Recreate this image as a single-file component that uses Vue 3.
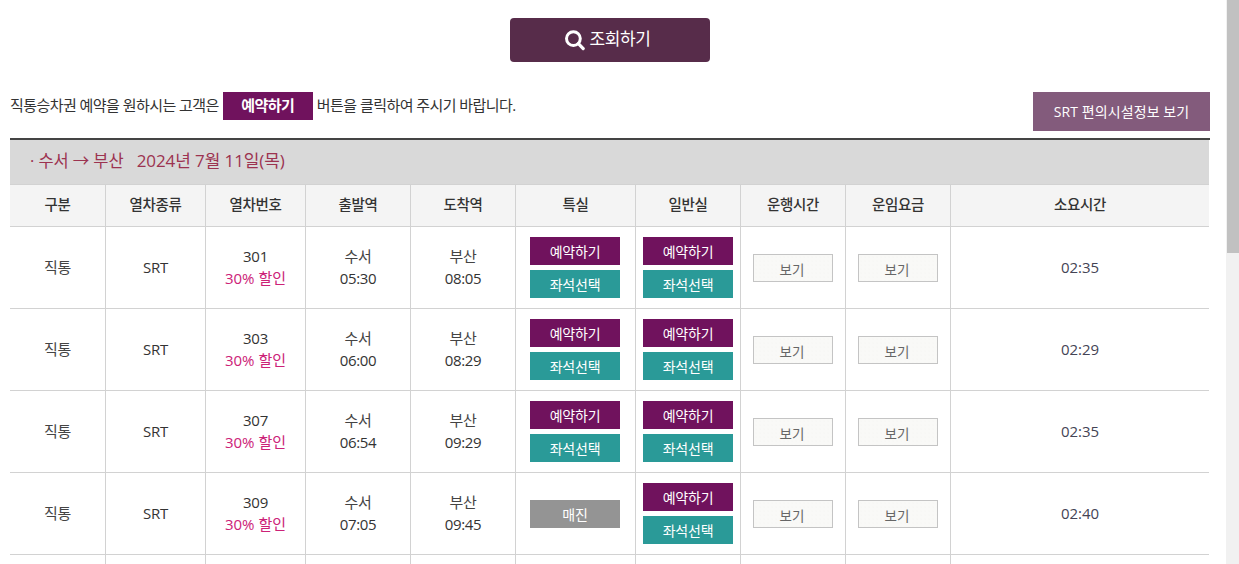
<script setup>
const rows = [
  { no: '301', dep: '05:30', arr: '08:05', dur: '02:35', special: true },
  { no: '303', dep: '06:00', arr: '08:29', dur: '02:29', special: true },
  { no: '307', dep: '06:54', arr: '09:29', dur: '02:35', special: true },
  { no: '309', dep: '07:05', arr: '09:45', dur: '02:40', special: false }
]
const heads = ['구분', '열차종류', '열차번호', '출발역', '도착역', '특실', '일반실', '운행시간', '운임요금', '소요시간']
const widths = [96, 100, 100, 105, 105, 120, 105, 105, 105, 258]
</script>

<template>
  <div class="page">
    <main class="main">
      <div class="search-wrap">
        <button class="search-btn">
          <svg class="search-icon" width="20" height="21" viewBox="0 0 20 21">
            <circle cx="8.4" cy="8.6" r="6.9" fill="none" stroke="#fff" stroke-width="3" />
            <path d="M13.4 13.6 L18.2 18.6" stroke="#fff" stroke-width="3.2" stroke-linecap="round" />
          </svg>
          <span class="search-label">조회하기</span>
        </button>
      </div>

      <div class="notice-row">
        <p class="notice">
          <span class="notice-text">직통승차권 예약을 원하시는 고객은</span>
          <span class="notice-badge">예약하기</span>
          <span class="notice-text">버튼을 클릭하여 주시기 바랍니다.</span>
        </p>
        <button class="facility-btn">SRT 편의시설정보 보기</button>
      </div>

      <div class="table-wrap">
        <div class="route">· 수서 → 부산 <span class="route-date">2024년 7월 11일(목)</span></div>
        <table class="trains">
          <colgroup>
            <col v-for="(w, i) in widths" :key="i" :style="{ width: w + 'px' }" />
          </colgroup>
          <thead>
            <tr>
              <th v-for="h in heads" :key="h">{{ h }}</th>
            </tr>
          </thead>
          <tbody>
            <tr v-for="r in rows" :key="r.no">
              <td><div class="cell-text">직통</div></td>
              <td class="dark"><div class="cell-text">SRT</div></td>
              <td class="dark">
                <div class="pair">
                  <div>{{ r.no }}</div>
                  <div class="discount">30% 할인</div>
                </div>
              </td>
              <td>
                <div class="pair">
                  <div>수서</div>
                  <div class="dark">{{ r.dep }}</div>
                </div>
              </td>
              <td>
                <div class="pair">
                  <div>부산</div>
                  <div class="dark">{{ r.arr }}</div>
                </div>
              </td>
              <td class="special">
                <div v-if="r.special" class="stack">
                  <button class="act reserve">예약하기</button>
                  <button class="act seat">좌석선택</button>
                </div>
                <button v-else class="act soldout">매진</button>
              </td>
              <td>
                <div class="stack">
                  <button class="act reserve">예약하기</button>
                  <button class="act seat">좌석선택</button>
                </div>
              </td>
              <td><button class="view">보기</button></td>
              <td><button class="view">보기</button></td>
              <td class="dur"><div class="cell-text">{{ r.dur }}</div></td>
            </tr>
            <tr class="filler">
              <td v-for="i in 10" :key="i"></td>
            </tr>
          </tbody>
        </table>
      </div>
    </main>
    <aside class="scrollbar"><div class="thumb"></div></aside>
  </div>
</template>

<style scoped>
.page {
  display: flex;
  height: 564px;
  overflow: hidden;
  background: #fff;
  font-family: "Open Sans", "Noto Sans CJK KR", sans-serif;
  color: #333;
}
.main {
  flex: 1;
  min-width: 0;
  padding: 18px 16px 0 10px;
}
.scrollbar {
  flex: none;
  width: 13px;
  background: #f1f1f1;
}
.thumb {
  margin-left: 1px;
  height: 253px;
  background: #c1c1c1;
}
button {
  font-family: inherit;
  border: none;
  padding: 0;
  cursor: pointer;
}
.search-wrap {
  display: flex;
  justify-content: center;
}
.search-btn {
  width: 200px;
  height: 44px;
  padding-right: 5px;
  border-radius: 4px;
  background: #572c4a;
  color: #fff;
  font-size: 17px;
  letter-spacing: -0.4px;
  display: flex;
  align-items: center;
  justify-content: center;
  gap: 5px;
}
.search-label {
  line-height: 20px;
  margin-bottom: 3px;
}
.notice-row {
  margin-top: 30px;
  height: 39px;
  display: flex;
  justify-content: space-between;
  align-items: flex-start;
}
.notice {
  margin: 0;
  height: 28px;
  font-size: 15px;
  letter-spacing: -0.55px;
  color: #333;
  display: flex;
  gap: 4px;
}
.notice-text {
  line-height: 26px;
}
.notice-badge {
  width: 90px;
  height: 28px;
  line-height: 27px;
  background: #70125d;
  color: #fff;
  font-weight: 700;
  text-align: center;
}
.facility-btn {
  width: 177px;
  height: 39px;
  background: #835b7c;
  color: #fff;
  font-size: 14px;
  letter-spacing: 0.1px;
  padding-bottom: 2px;
}
.table-wrap {
  margin-top: 7px;
  border-top: 2px solid #444;
}
.route {
  width: 1199px;
  height: 44px;
  line-height: 42px;
  padding-left: 20px;
  box-sizing: border-box;
  background: #d9d9d9;
  color: #9c3350;
  font-size: 16.5px;
  letter-spacing: -0.1px;
}
.route-date {
  margin-left: 9px;
  font-size: 17px;
}
.trains {
  width: 1199px;
  table-layout: fixed;
  border-collapse: separate;
  border-spacing: 0;
  font-size: 15px;
  letter-spacing: -0.3px;
  line-height: 22px;
  text-align: center;
}
th {
  height: 43px;
  padding: 0 0 2px;
  box-sizing: border-box;
  background: #f4f4f4;
  font-weight: 500;
  font-size: 14.5px;
  color: #333;
  border-top: 1px solid #d2d2d2;
  border-bottom: 1px solid #d2d2d2;
  border-right: 1px solid #d2d2d2;
}
td {
  height: 82px;
  padding: 0;
  box-sizing: border-box;
  border-bottom: 1px solid #d2d2d2;
  border-right: 1px solid #d2d2d2;
  color: #444;
}
th:last-child,
td:last-child {
  border-right: none;
}
.filler td {
  height: 12px;
  border-bottom: none;
}
.cell-text {
  padding-bottom: 1px;
}
.pair {
  padding-bottom: 2px;
}
.special {
  padding-right: 1px;
}
.dark {
  color: #333;
}
.discount {
  color: #cc2277;
  letter-spacing: 0;
}
.dur {
  color: #445;
  letter-spacing: 0;
}
.stack {
  display: flex;
  flex-direction: column;
  align-items: center;
  gap: 5px;
}
.act {
  display: block;
  margin: 0 auto;
  width: 90px;
  height: 28px;
  color: #fff;
  font-size: 14px;
  letter-spacing: -0.2px;
}
.reserve {
  background: #70125d;
}
.seat {
  background: #2a9a98;
}
.soldout {
  background: #949494;
}
.view {
  display: block;
  margin: 0 auto;
  width: 80px;
  height: 28px;
  box-sizing: border-box;
  border: 1px solid #c4c4c4;
  background-color: #f9f9f7;
  background-image: radial-gradient(#f5f5f2 0.6px, transparent 0.8px);
  background-size: 4px 4px;
  color: #666;
  font-size: 13.5px;
  padding: 2px 2px 0 0;
}
</style>
